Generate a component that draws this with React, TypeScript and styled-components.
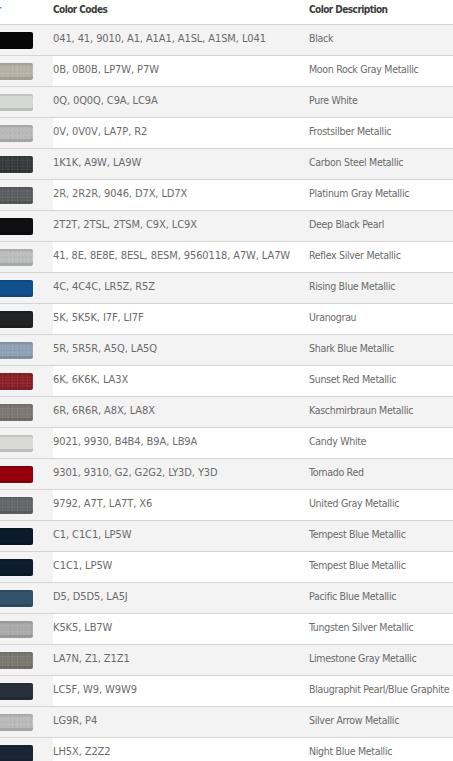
import React from 'react';
import styled, { createGlobalStyle } from 'styled-components';

const GlobalStyle = createGlobalStyle`
    html, body {
        margin: 0;
        padding: 0;
        background: #fff;
        overflow: hidden;
    }
    body {
        font-family: "DejaVu Sans Condensed", "DejaVu Sans", sans-serif;
        font-stretch: condensed;
    }
`;

type Paint = { codes: string; name: string; swatch: string; grain?: boolean };

const paints: Paint[] = [
    { codes: '041, 41, 9010, A1, A1A1, A1SL, A1SM, L041', name: 'Black', swatch: '#070707' },
    { codes: '0B, 0B0B, LP7W, P7W', name: 'Moon Rock Gray Metallic', swatch: '#b6b1a6', grain: true },
    { codes: '0Q, 0Q0Q, C9A, LC9A', name: 'Pure White', swatch: '#d6d8d6' },
    { codes: '0V, 0V0V, LA7P, R2', name: 'Frostsilber Metallic', swatch: '#b9b9b9', grain: true },
    { codes: '1K1K, A9W, LA9W', name: 'Carbon Steel Metallic', swatch: '#35383a', grain: true },
    { codes: '2R, 2R2R, 9046, D7X, LD7X', name: 'Platinum Gray Metallic', swatch: '#5a5c60', grain: true },
    { codes: '2T2T, 2TSL, 2TSM, C9X, LC9X', name: 'Deep Black Pearl', swatch: '#0f0f12' },
    { codes: '41, 8E, 8E8E, 8ESL, 8ESM, 9560118, A7W, LA7W', name: 'Reflex Silver Metallic', swatch: '#bcbdbe', grain: true },
    { codes: '4C, 4C4C, LR5Z, R5Z', name: 'Rising Blue Metallic', swatch: '#11508f' },
    { codes: '5K, 5K5K, I7F, LI7F', name: 'Uranograu', swatch: '#222325' },
    { codes: '5R, 5R5R, A5Q, LA5Q', name: 'Shark Blue Metallic', swatch: '#8ea0b6', grain: true },
    { codes: '6K, 6K6K, LA3X', name: 'Sunset Red Metallic', swatch: '#8b1d25', grain: true },
    { codes: '6R, 6R6R, A8X, LA8X', name: 'Kaschmirbraun Metallic', swatch: '#7c7672', grain: true },
    { codes: '9021, 9930, B4B4, B9A, LB9A', name: 'Candy White', swatch: '#d9dad7' },
    { codes: '9301, 9310, G2, G2G2, LY3D, Y3D', name: 'Tornado Red', swatch: '#96000c' },
    { codes: '9792, A7T, LA7T, X6', name: 'United Gray Metallic', swatch: '#626466', grain: true },
    { codes: 'C1, C1C1, LP5W', name: 'Tempest Blue Metallic', swatch: '#0b1a2c' },
    { codes: 'C1C1, LP5W', name: 'Tempest Blue Metallic', swatch: '#0e1c2f' },
    { codes: 'D5, D5D5, LA5J', name: 'Pacific Blue Metallic', swatch: '#33536d' },
    { codes: 'K5K5, LB7W', name: 'Tungsten Silver Metallic', swatch: '#a9a9a9', grain: true },
    { codes: 'LA7N, Z1, Z1Z1', name: 'Limestone Gray Metallic', swatch: '#77776f', grain: true },
    { codes: 'LC5F, W9, W9W9', name: 'Blaugraphit Pearl/Blue Graphite', swatch: '#27303c' },
    { codes: 'LG9R, P4', name: 'Silver Arrow Metallic', swatch: '#b9b9b9', grain: true },
    { codes: 'LH5X, Z2Z2', name: 'Night Blue Metallic', swatch: '#1a2535' },
];

const App = () => {
    return (
        <>
            <GlobalStyle />
            <Table>
                <HeaderRow>
                    <HeadCell $accent>Color</HeadCell>
                    <HeadCell>Color Codes</HeadCell>
                    <HeadCell>Color Description</HeadCell>
                </HeaderRow>
                {paints.map((p, i) => (
                    <Row key={i} $shaded={i % 2 === 0}>
                        <SwatchCell>
                            <Swatch $color={p.swatch} $grain={!!p.grain} />
                        </SwatchCell>
                        <CodeCell>{p.codes}</CodeCell>
                        <NameCell>{p.name}</NameCell>
                    </Row>
                ))}
            </Table>
        </>
    );
};

const Table = styled.div`
    margin-left: -40px;
    width: 500px;
    display: flex;
    flex-direction: column;
`;

const HeaderRow = styled.div`
    display: grid;
    grid-template-columns: 93px 256px 1fr;
    height: 24px;
    border-bottom: 1px solid #d4d4d4;
    background: #fff;
    align-items: start;
`;

const HeadCell = styled.div<{ $accent?: boolean }>`
    padding-top: 3px;
    font-size: 10px;
    line-height: 13px;
    font-weight: bold;
    letter-spacing: -0.55px;
    color: ${props => props.$accent ? '#1b7fd1' : '#3c3c3c'};
    white-space: nowrap;
    padding-left: ${props => props.$accent ? '17px' : '0'};
`;

const Row = styled.div<{ $shaded: boolean }>`
    display: grid;
    grid-template-columns: 93px 256px 1fr;
    height: 30px;
    border-bottom: 1px solid #d4d4d4;
    background: ${props => props.$shaded ? '#f3f3f3' : '#fff'};
    align-items: center;
`;

const SwatchCell = styled.div`
    height: 100%;
    background: #f3f3f3;
    display: flex;
    align-items: flex-start;
    padding-top: 7px;
    box-sizing: border-box;
`;

const Swatch = styled.div<{ $color: string; $grain: boolean }>`
    width: 73px;
    height: 17px;
    border-radius: 2px;
    background-color: ${props => props.$color};
    background-image: ${props => props.$grain
        ? `radial-gradient(circle at 30% 40%, rgba(255,255,255,0.08) 0.6px, transparent 1px),
           radial-gradient(circle at 70% 60%, rgba(0,0,0,0.06) 0.6px, transparent 1px),
           radial-gradient(circle at 50% 50%, rgba(255,255,255,0.05) 0.5px, transparent 1px)`
        : 'none'};
    background-size: 3px 3px, 4px 5px, 5px 2px;
    box-shadow: inset 0 2px 0 rgba(0,0,0,0.1), inset 0 -3px 0 rgba(0,0,0,0.12);
`;

const CodeCell = styled.div`
    font-size: 11px;
    line-height: 13px;
    letter-spacing: -0.1px;
    color: #6a6a6a;
    white-space: nowrap;
    padding-bottom: 3px;
`;

const NameCell = styled(CodeCell)`
    font-size: 10.5px;
    letter-spacing: -0.3px;
`;

export default App;
